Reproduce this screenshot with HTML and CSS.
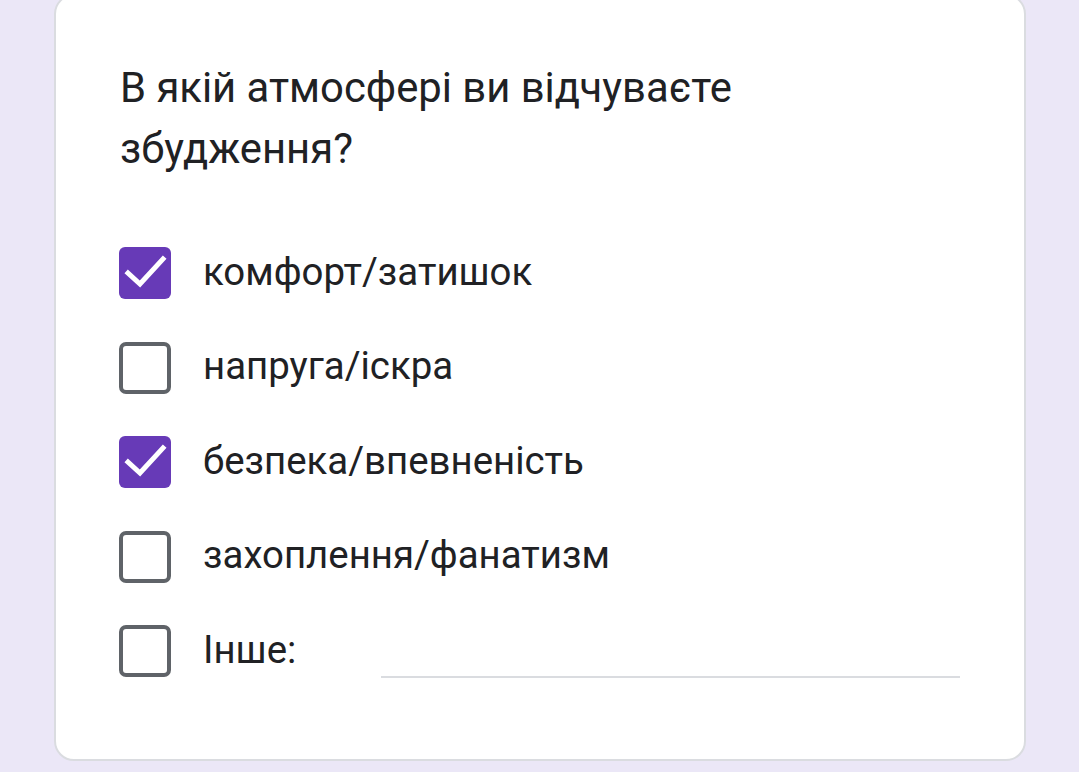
FILE: index.html
```html
<!DOCTYPE html>
<html lang="uk">
<head>
<meta charset="utf-8">
<link rel="stylesheet" href="styles.css">
</head>
<body>
<div class="page">
  <div class="card">
    <div class="question">В якій атмосфері ви відчуваєте збудження?</div>
    <div class="options">
      <div class="option">
        <span class="box checked"><svg viewBox="0 0 52 52" width="52" height="52"><path d="M9 26 L21 37 L44 12" fill="none" stroke="#fff" stroke-width="5" stroke-linecap="square"/></svg></span>
        <span class="label">комфорт/затишок</span>
      </div>
      <div class="option">
        <span class="box"></span>
        <span class="label">напруга/іскра</span>
      </div>
      <div class="option">
        <span class="box checked"><svg viewBox="0 0 52 52" width="52" height="52"><path d="M9 26 L21 37 L44 12" fill="none" stroke="#fff" stroke-width="5" stroke-linecap="square"/></svg></span>
        <span class="label">безпека/впевненість</span>
      </div>
      <div class="option">
        <span class="box"></span>
        <span class="label">захоплення/фанатизм</span>
      </div>
      <div class="option other">
        <span class="box"></span>
        <span class="label">Інше:</span>
        <span class="line"></span>
      </div>
    </div>
  </div>
</div>
</body>
</html>
```

FILE: styles.css
```css
html, body {
  margin: 0;
  padding: 0;
  background: #ebe7f7;
  height: 100%;
  overflow: hidden;
}

body {
  font-family: Roboto, "Noto Sans", sans-serif;
  color: #202124;
}

.page {
  padding-left: 54px;
  width: 972px;
}

.card {
  margin-top: -6px;
  background: #fff;
  border: 2px solid #dadce0;
  border-radius: 20px;
  padding: 61px 64px 82px 64px;
}

.question {
  font-size: 41.8px;
  line-height: 61px;
  width: 700px;
}

.options {
  margin-top: 68px;
  display: flex;
  flex-direction: column;
  gap: 42.5px;
}

.option {
  display: flex;
  align-items: center;
  height: 52px;
}

.box {
  width: 52px;
  height: 52px;
  box-sizing: border-box;
  border: 4px solid #5f6368;
  border-radius: 7px;
  flex: none;
  margin-left: -1px;
  display: block;
}

.box.checked {
  border: none;
  background: #673ab7;
  border-radius: 6px;
}

.box svg {
  display: block;
}

.label {
  margin-left: 32px;
  font-size: 38.4px;
  padding-bottom: 4px;
}

.line {
  flex: 1;
  align-self: flex-end;
  height: 2px;
  background: #dadce0;
  margin-left: 85px;
  margin-bottom: -1px;
}
```
